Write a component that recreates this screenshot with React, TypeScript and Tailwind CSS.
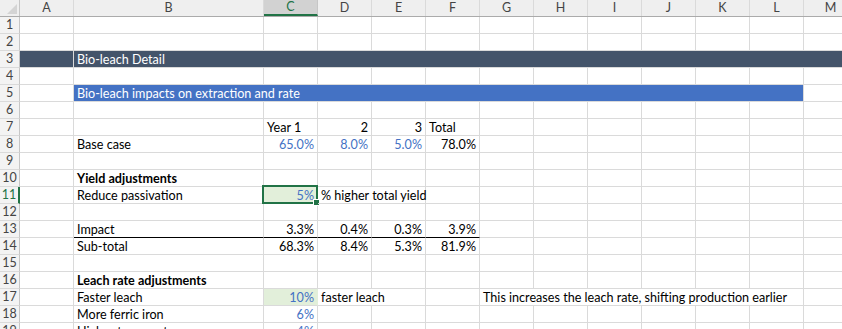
import React from "react";

type Cell = {
  col: number;
  span?: number;
  text?: string;
  align?: "left" | "right";
  cls?: string;
  selected?: boolean;
};

const W = [54, 190, 54, 54, 54, 54, 54, 54, 54, 54, 54, 54, 54];
const LETTERS = ["A", "B", "C", "D", "E", "F", "G", "H", "I", "J", "K", "L", "M"];

const BLUE = "text-[#4472c4]";

const rows: { n: number; cells: Cell[] }[] = [
  { n: 1, cells: [] },
  { n: 2, cells: [] },
  {
    n: 3,
    cells: [
      { col: 0, cls: "bg-[#44546a] border-[#44546a]" },
      { col: 1, span: 12, text: "Bio-leach Detail", cls: "bg-[#44546a] border-[#44546a] text-white" },
    ],
  },
  { n: 4, cells: [] },
  {
    n: 5,
    cells: [
      { col: 1, span: 11, text: "Bio-leach impacts on extraction and rate", cls: "bg-[#4472c4] border-[#4472c4] text-white" },
    ],
  },
  { n: 6, cells: [] },
  {
    n: 7,
    cells: [
      { col: 2, text: "Year 1" },
      { col: 3, text: "2", align: "right" },
      { col: 4, text: "3", align: "right" },
      { col: 5, text: "Total" },
    ],
  },
  {
    n: 8,
    cells: [
      { col: 1, text: "Base case" },
      { col: 2, text: "65.0%", align: "right", cls: BLUE },
      { col: 3, text: "8.0%", align: "right", cls: BLUE },
      { col: 4, text: "5.0%", align: "right", cls: BLUE },
      { col: 5, text: "78.0%", align: "right" },
    ],
  },
  { n: 9, cells: [] },
  { n: 10, cells: [{ col: 1, text: "Yield adjustments", cls: "font-bold" }] },
  {
    n: 11,
    cells: [
      { col: 1, text: "Reduce passivation" },
      { col: 2, text: "5%", align: "right", cls: BLUE + " bg-[#e2efda]", selected: true },
      { col: 3, span: 2, text: "% higher total yield" },
    ],
  },
  { n: 12, cells: [] },
  {
    n: 13,
    cells: [
      { col: 1, text: "Impact", cls: "border-b-black" },
      { col: 2, text: "3.3%", align: "right", cls: "border-b-black" },
      { col: 3, text: "0.4%", align: "right", cls: "border-b-black" },
      { col: 4, text: "0.3%", align: "right", cls: "border-b-black" },
      { col: 5, text: "3.9%", align: "right", cls: "border-b-black" },
    ],
  },
  {
    n: 14,
    cells: [
      { col: 1, text: "Sub-total" },
      { col: 2, text: "68.3%", align: "right" },
      { col: 3, text: "8.4%", align: "right" },
      { col: 4, text: "5.3%", align: "right" },
      { col: 5, text: "81.9%", align: "right" },
    ],
  },
  { n: 15, cells: [] },
  { n: 16, cells: [{ col: 1, text: "Leach rate adjustments", cls: "font-bold" }] },
  {
    n: 17,
    cells: [
      { col: 1, text: "Faster leach" },
      { col: 2, text: "10%", align: "right", cls: BLUE + " bg-[#e2efda] border-r-[#e2efda]" },
      { col: 3, span: 2, text: "faster leach" },
      { col: 6, span: 6, text: "This increases the leach rate, shifting production earlier" },
    ],
  },
  {
    n: 18,
    cells: [
      { col: 1, text: "More ferric iron" },
      { col: 2, text: "6%", align: "right", cls: BLUE },
    ],
  },
  {
    n: 19,
    cells: [
      { col: 1, text: "Higher temperature" },
      { col: 2, text: "4%", align: "right", cls: BLUE },
    ],
  },
];

function Row({ n, cells }: { n: number; cells: Cell[] }) {
  const out: React.ReactNode[] = [];
  let i = 0;
  while (i < W.length) {
    const c = cells.find((x) => x.col === i);
    if (c) {
      const span = c.span ?? 1;
      let w = 0;
      for (let k = i; k < i + span && k < W.length; k++) w += W[k];
      out.push(
        <div
          key={i}
          style={{ width: w }}
          className={
            "relative shrink-0 h-[17px] border-r border-b border-[#dadada] px-[3px] whitespace-nowrap overflow-visible flex items-end leading-[15px] " +
            (c.align === "right" ? "justify-end " : "justify-start ") +
            (c.cls ?? "")
          }
        >
          {c.text}
          {c.selected && (
            <div className="absolute -left-[2px] -top-[2px] w-[56px] h-[19px] border-2 border-[#217346] pointer-events-none">
              <div className="absolute -right-[4px] -bottom-[4px] w-[5px] h-[5px] bg-[#217346] border border-white box-content" />
            </div>
          )}
        </div>
      );
      i += span;
    } else {
      out.push(
        <div
          key={i}
          style={{ width: W[i] }}
          className="shrink-0 h-[17px] border-r border-b border-[#dadada]"
        />
      );
      i += 1;
    }
  }
  const active = n === 11;
  return (
    <div className="flex">
      <div
        className={
          "shrink-0 w-[20px] h-[17px] border-b border-[#dadada] bg-[#f3f3f3] flex items-end pb-[1px] justify-center text-[12.5px] leading-[14px] " +
          (active
            ? "border-r-2 border-r-[#217346] text-[#217346] bg-[#e6e6e6]"
            : "border-r border-r-[#c6c6c6] text-[#444]")
        }
      >
        {n}
      </div>
      {out}
    </div>
  );
}

export default function App() {
  return (
    <div
      className="w-[842px] h-[329px] overflow-hidden bg-white text-black text-[12.6px]"
      style={{ fontFamily: "Lato, 'Open Sans', sans-serif" }}
    >
      <div className="flex h-[17px] bg-[#efefef] border-b border-[#ababab]">
        <div className="relative shrink-0 w-[20px] h-[16px] border-r border-[#c6c6c6]">
          <div className="absolute right-[2px] bottom-[2px] w-0 h-0 border-l-[10px] border-l-transparent border-b-[10px] border-b-[#d4d4d4]" />
        </div>
        {LETTERS.map((l, i) => (
          <div
            key={l}
            style={{ width: W[i] }}
            className={
              "shrink-0 h-[16px] flex items-center justify-center text-[12.5px] leading-none " +
              (i === 2
                ? "bg-[#d2d2d2] text-[#217346] border-b-2 border-[#217346] border-r border-r-[#c6c6c6]"
                : "text-[#444] border-r border-[#dadada]")
            }
          >
            {l}
          </div>
        ))}
      </div>
      {rows.map((r) => (
        <Row key={r.n} n={r.n} cells={r.cells} />
      ))}
    </div>
  );
}
